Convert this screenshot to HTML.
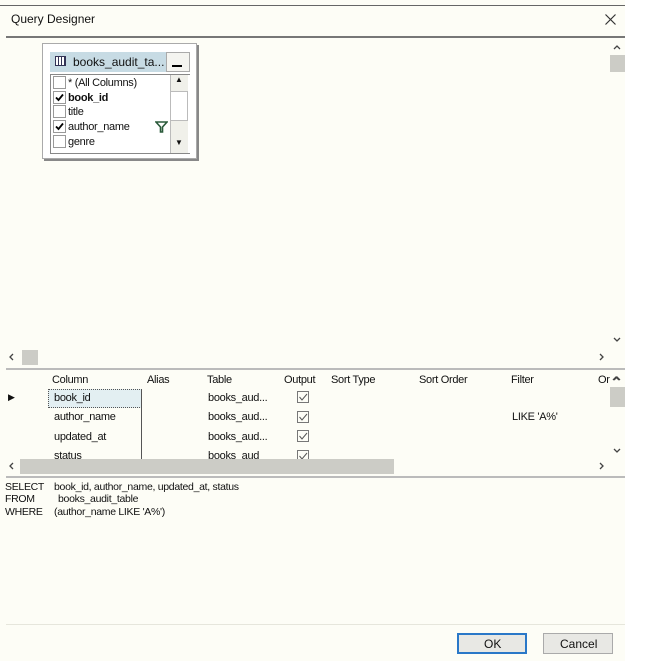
<!DOCTYPE html>
<html><head><meta charset="utf-8"><style>
*{margin:0;padding:0;box-sizing:border-box}
body{width:655px;height:661px;background:#fff;position:relative;overflow:hidden;font-family:"Liberation Sans",sans-serif;font-size:11px;color:#111}
.a{position:absolute}
.t{position:absolute;white-space:nowrap;font-size:11px;letter-spacing:-0.3px}
svg.a path{fill:none}
</style></head><body>
<div class="a" style="left:0;top:0;width:625px;height:661px;background:#fdfdf6"></div>
<div class="a" style="left:0;top:5px;width:625px;height:1px;background:#666"></div>
<div class="t" style="left:11px;top:12px;font-size:12px;letter-spacing:0">Query Designer</div>
<svg class="a" style="left:605px;top:14px" width="11" height="11"><path d="M0.5 0.5L10.5 10.5M10.5 0.5L0.5 10.5" stroke="#333" stroke-width="1.2"/></svg>
<div class="a" style="left:6px;top:36px;width:619px;height:2px;background:#777"></div>

<!-- chevrons -->
<svg class="a" style="left:0;top:0" width="655" height="661">
<g stroke="#444" stroke-width="1.3" fill="none">
<path d="M614 49L617 46L620 49"/>
<path d="M614 338L617 341L620 338"/>
<path d="M13 354L10 357L13 360"/>
<path d="M600 354L603 357L600 360"/>
<path d="M614 380L617 377L620 380"/>
<path d="M614 449L617 452L620 449"/>
<path d="M13 463L10 466L13 469"/>
<path d="M600 463L603 466L600 469"/>
</g></svg>
<div class="a" style="left:610px;top:55px;width:15px;height:17px;background:#ccccc6"></div>
<div class="a" style="left:22px;top:350px;width:16px;height:15px;background:#ccccc6"></div>

<!-- table box -->
<div class="a" style="left:42px;top:43px;width:155px;height:116px;background:#fff;border:1px solid #aaa;box-shadow:2px 2px 0 #888"></div>
<div class="a" style="left:50px;top:52px;width:116px;height:20px;background:#c7dbe4"></div>
<div class="a" style="left:55px;top:56px;width:11px;height:10px;border:1px solid #335;background:repeating-linear-gradient(90deg,#fff 0 2px,#335 2px 3px)"></div>
<div class="t" style="left:73px;top:55px;font-size:12px;letter-spacing:0">books_audit_ta...</div>
<div class="a" style="left:166px;top:52px;width:24px;height:20px;background:#f4f4f0;border:1px solid #aaa"></div>
<div class="a" style="left:172px;top:65px;width:10px;height:2px;background:#000"></div>
<div class="a" style="left:50px;top:74px;width:140px;height:80px;border:1px solid #888;border-right:none"></div>
<div class="a" style="left:170px;top:75px;width:18px;height:78px;background:#f0f0ea;border-left:1px solid #bbb"></div>
<div class="a" style="left:170px;top:91px;width:18px;height:30px;background:#fff;border:1px solid #bbb"></div>
<div class="t" style="left:175px;top:75px;font-size:8px">▲</div>
<div class="t" style="left:175px;top:138px;font-size:8px">▼</div>
<div class="a" style="left:53px;top:76px;width:13px;height:13px;border:1px solid #999;background:#fff"></div>
<div class="a" style="left:53px;top:91px;width:13px;height:13px;border:1px solid #999;background:#fff"></div>
<div class="a" style="left:53px;top:105px;width:13px;height:13px;border:1px solid #999;background:#fff"></div>
<div class="a" style="left:53px;top:120px;width:13px;height:13px;border:1px solid #999;background:#fff"></div>
<div class="a" style="left:53px;top:135px;width:13px;height:13px;border:1px solid #999;background:#fff"></div>
<svg class="a" style="left:53px;top:91px" width="13" height="45"><path d="M3 6.5L5.5 9L10 3.5M3 35.5L5.5 38L10 32.5" stroke="#000" stroke-width="1.8"/></svg>
<div class="t" style="left:68px;top:77px">* (All Columns)</div>
<div class="t" style="left:68px;top:92px;font-weight:bold">book_id</div>
<div class="t" style="left:68px;top:106px">title</div>
<div class="t" style="left:68px;top:121px">author_name</div>
<div class="t" style="left:68px;top:136px">genre</div>
<svg class="a" style="left:155px;top:121px" width="13" height="12"><path d="M1 1H12L7.5 6V11H5.5V6Z" stroke="#2a5a3a" stroke-width="1.6"/></svg>

<div class="a" style="left:6px;top:368px;width:619px;height:2px;background:#bbb"></div>

<!-- grid -->
<div class="t" style="left:52px;top:374px">Column</div>
<div class="t" style="left:147px;top:374px">Alias</div>
<div class="t" style="left:207px;top:374px">Table</div>
<div class="t" style="left:284px;top:374px">Output</div>
<div class="t" style="left:331px;top:374px">Sort Type</div>
<div class="t" style="left:419px;top:374px">Sort Order</div>
<div class="t" style="left:511px;top:374px">Filter</div>
<div class="t" style="left:598px;top:374px">Or</div>
<div class="a" style="left:610px;top:387px;width:15px;height:20px;background:#ccccc6"></div>
<div class="t" style="left:8px;top:392px;font-size:9px">▶</div>
<div class="a" style="left:48px;top:389px;width:94px;height:19px;background:#e3eff2;border:1px dotted #555"></div>
<div class="a" style="left:141px;top:389px;width:1px;height:70px;background:#555"></div>
<div class="t" style="left:54px;top:392px">book_id</div>
<div class="t" style="left:54px;top:411px">author_name</div>
<div class="t" style="left:54px;top:431px">updated_at</div>
<div class="t" style="left:54px;top:450px;height:9px;overflow:hidden">status</div>
<div class="t" style="left:208px;top:392px">books_aud...</div>
<div class="t" style="left:208px;top:411px">books_aud...</div>
<div class="t" style="left:208px;top:431px">books_aud...</div>
<div class="t" style="left:208px;top:450px;height:9px;overflow:hidden">books_aud</div>
<div class="a" style="left:297px;top:391px;width:12px;height:12px;border:1px solid #777"></div>
<div class="a" style="left:297px;top:411px;width:12px;height:12px;border:1px solid #777"></div>
<div class="a" style="left:297px;top:430px;width:12px;height:12px;border:1px solid #777"></div>
<div class="a" style="left:297px;top:450px;width:12px;height:9px;border:1px solid #777;border-bottom:none"></div>
<svg class="a" style="left:297px;top:391px" width="12" height="70"><g stroke="#555" stroke-width="1"><path d="M2.5 6L5 9L10 3"/><path d="M2.5 26L5 29L10 23"/><path d="M2.5 45L5 48L10 42"/><path d="M2.5 65L5 68L10 62"/></g></svg>
<div class="t" style="left:512px;top:411px">LIKE 'A%'</div>
<div class="a" style="left:0;top:459px;width:608px;height:16px;background:#fdfdf6"></div>
<div class="a" style="left:20px;top:459px;width:374px;height:15px;background:#ccccc6"></div>
<svg class="a" style="left:0;top:0" width="655" height="661"><g stroke="#444" stroke-width="1.3"><path d="M13 463L10 466L13 469"/><path d="M600 463L603 466L600 469"/><path d="M613 380L616 377L619 380"/></g></svg>
<div class="a" style="left:6px;top:476px;width:619px;height:2px;background:#bbb"></div>

<!-- sql -->
<div class="t" style="left:5px;top:481px;font-size:10.5px">SELECT</div>
<div class="t" style="left:5px;top:493px;font-size:10.5px">FROM</div>
<div class="t" style="left:5px;top:506px;font-size:10.5px">WHERE</div>
<div class="t" style="left:54px;top:481px;font-size:10.5px">book_id, author_name, updated_at, status</div>
<div class="t" style="left:58px;top:493px;font-size:10.5px">books_audit_table</div>
<div class="t" style="left:54px;top:506px;font-size:10.5px">(author_name LIKE 'A%')</div>

<div class="a" style="left:6px;top:624px;width:619px;height:1px;background:#e6e6dc"></div>
<div class="a" style="left:457px;top:633px;width:70px;height:21px;background:#e8e8e4;border:2px solid #2a78c8"></div>
<div class="t" style="left:484px;top:637px;font-size:12px;letter-spacing:0">OK</div>
<div class="a" style="left:543px;top:633px;width:70px;height:21px;background:#e8e8e4;border:1px solid #aaa"></div>
<div class="t" style="left:560px;top:637px;font-size:12px;letter-spacing:0">Cancel</div>
</body></html>
